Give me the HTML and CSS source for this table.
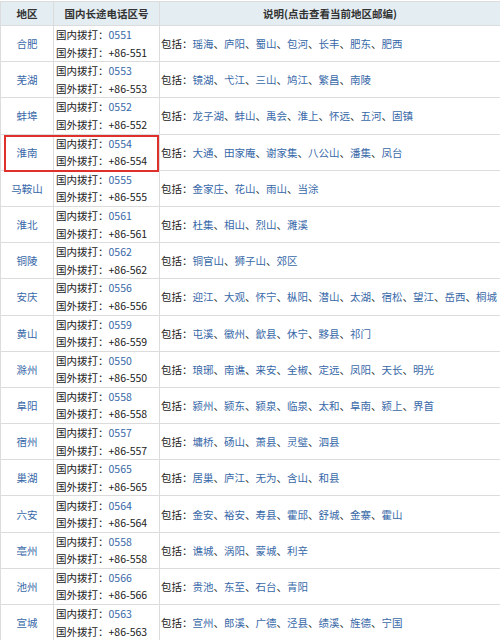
FILE: index.html
```html
<!DOCTYPE html>
<html lang="zh-CN">
<head>
<meta charset="utf-8">
<title>安徽省长途电话区号</title>
<link rel="stylesheet" href="styles.css">
</head>
<body>
<div class="wrap">
<table class="codes">
<colgroup><col class="c1"><col class="c2"><col class="c3"></colgroup>
<thead>
<tr><th>地区</th><th>国内长途电话区号</th><th>说明(点击查看当前地区邮编)</th></tr>
</thead>
<tbody>
<tr><td class="city"><a>合肥</a></td><td class="code">国内拨打：<a>0551</a><br>国外拨打：+86-551</td><td class="desc">包括：<a>瑶海</a>、<a>庐阳</a>、<a>蜀山</a>、<a>包河</a>、<a>长丰</a>、<a>肥东</a>、<a>肥西</a></td></tr>
<tr><td class="city"><a>芜湖</a></td><td class="code">国内拨打：<a>0553</a><br>国外拨打：+86-553</td><td class="desc">包括：<a>镜湖</a>、<a>弋江</a>、<a>三山</a>、<a>鸠江</a>、<a>繁昌</a>、<a>南陵</a></td></tr>
<tr><td class="city"><a>蚌埠</a></td><td class="code">国内拨打：<a>0552</a><br>国外拨打：+86-552</td><td class="desc">包括：<a>龙子湖</a>、<a>蚌山</a>、<a>禹会</a>、<a>淮上</a>、<a>怀远</a>、<a>五河</a>、<a>固镇</a></td></tr>
<tr><td class="city"><a>淮南</a></td><td class="code">国内拨打：<a>0554</a><br>国外拨打：+86-554</td><td class="desc">包括：<a>大通</a>、<a>田家庵</a>、<a>谢家集</a>、<a>八公山</a>、<a>潘集</a>、<a>凤台</a></td></tr>
<tr><td class="city"><a>马鞍山</a></td><td class="code">国内拨打：<a>0555</a><br>国外拨打：+86-555</td><td class="desc">包括：<a>金家庄</a>、<a>花山</a>、<a>雨山</a>、<a>当涂</a></td></tr>
<tr><td class="city"><a>淮北</a></td><td class="code">国内拨打：<a>0561</a><br>国外拨打：+86-561</td><td class="desc">包括：<a>杜集</a>、<a>相山</a>、<a>烈山</a>、<a>濉溪</a></td></tr>
<tr><td class="city"><a>铜陵</a></td><td class="code">国内拨打：<a>0562</a><br>国外拨打：+86-562</td><td class="desc">包括：<a>铜官山</a>、<a>狮子山</a>、<a>郊区</a></td></tr>
<tr><td class="city"><a>安庆</a></td><td class="code">国内拨打：<a>0556</a><br>国外拨打：+86-556</td><td class="desc">包括：<a>迎江</a>、<a>大观</a>、<a>怀宁</a>、<a>枞阳</a>、<a>潜山</a>、<a>太湖</a>、<a>宿松</a>、<a>望江</a>、<a>岳西</a>、<a>桐城</a></td></tr>
<tr><td class="city"><a>黄山</a></td><td class="code">国内拨打：<a>0559</a><br>国外拨打：+86-559</td><td class="desc">包括：<a>屯溪</a>、<a>徽州</a>、<a>歙县</a>、<a>休宁</a>、<a>黟县</a>、<a>祁门</a></td></tr>
<tr><td class="city"><a>滁州</a></td><td class="code">国内拨打：<a>0550</a><br>国外拨打：+86-550</td><td class="desc">包括：<a>琅琊</a>、<a>南谯</a>、<a>来安</a>、<a>全椒</a>、<a>定远</a>、<a>凤阳</a>、<a>天长</a>、<a>明光</a></td></tr>
<tr><td class="city"><a>阜阳</a></td><td class="code">国内拨打：<a>0558</a><br>国外拨打：+86-558</td><td class="desc">包括：<a>颍州</a>、<a>颍东</a>、<a>颍泉</a>、<a>临泉</a>、<a>太和</a>、<a>阜南</a>、<a>颍上</a>、<a>界首</a></td></tr>
<tr><td class="city"><a>宿州</a></td><td class="code">国内拨打：<a>0557</a><br>国外拨打：+86-557</td><td class="desc">包括：<a>墉桥</a>、<a>砀山</a>、<a>萧县</a>、<a>灵璧</a>、<a>泗县</a></td></tr>
<tr><td class="city"><a>巢湖</a></td><td class="code">国内拨打：<a>0565</a><br>国外拨打：+86-565</td><td class="desc">包括：<a>居巢</a>、<a>庐江</a>、<a>无为</a>、<a>含山</a>、<a>和县</a></td></tr>
<tr><td class="city"><a>六安</a></td><td class="code">国内拨打：<a>0564</a><br>国外拨打：+86-564</td><td class="desc">包括：<a>金安</a>、<a>裕安</a>、<a>寿县</a>、<a>霍邱</a>、<a>舒城</a>、<a>金寨</a>、<a>霍山</a></td></tr>
<tr><td class="city"><a>亳州</a></td><td class="code">国内拨打：<a>0558</a><br>国外拨打：+86-558</td><td class="desc">包括：<a>谯城</a>、<a>涡阳</a>、<a>蒙城</a>、<a>利辛</a></td></tr>
<tr><td class="city"><a>池州</a></td><td class="code">国内拨打：<a>0566</a><br>国外拨打：+86-566</td><td class="desc">包括：<a>贵池</a>、<a>东至</a>、<a>石台</a>、<a>青阳</a></td></tr>
<tr><td class="city"><a>宣城</a></td><td class="code">国内拨打：<a>0563</a><br>国外拨打：+86-563</td><td class="desc">包括：<a>宣州</a>、<a>郎溪</a>、<a>广德</a>、<a>泾县</a>、<a>绩溪</a>、<a>旌德</a>、<a>宁国</a></td></tr>
</tbody>
</table>
<div class="highlight"></div>
</div>
</body>
</html>
```
FILE: styles.css
```css
html, body {
  margin: 0;
  padding: 0;
  background: #ffffff;
}
body {
  font-family: "Noto Sans CJK SC", "Liberation Sans", sans-serif;
  font-size: 10.5px;
  color: #222222;
}
.wrap {
  position: relative;
  padding-top: 1px;
  width: 500px;
}
.codes {
  border-collapse: collapse;
  table-layout: fixed;
  width: 500px;
}
.c1 { width: 53px; }
.c2 { width: 106px; }
.c3 { width: 341px; }
.codes th,
.codes td {
  border: 1px solid #dcdcdc;
  padding: 0;
}
.codes th {
  height: 23px;
  background: #e3edf2;
  font-weight: bold;
  color: #333333;
  text-align: center;
  font-size: 10.5px;
}
.codes td {
  height: 35.2px;
  vertical-align: middle;
}
.codes a {
  color: #3768a8;
  text-decoration: none;
}
.city {
  text-align: center;
}
.code {
  line-height: 17.5px;
  padding-left: 2px !important;
  white-space: nowrap;
}
.desc {
  padding-left: 1px !important;
  white-space: nowrap;
}
.highlight {
  position: absolute;
  left: 4px;
  top: 135px;
  width: 151px;
  height: 33px;
  border: 2px solid #e0302c;
}
```
